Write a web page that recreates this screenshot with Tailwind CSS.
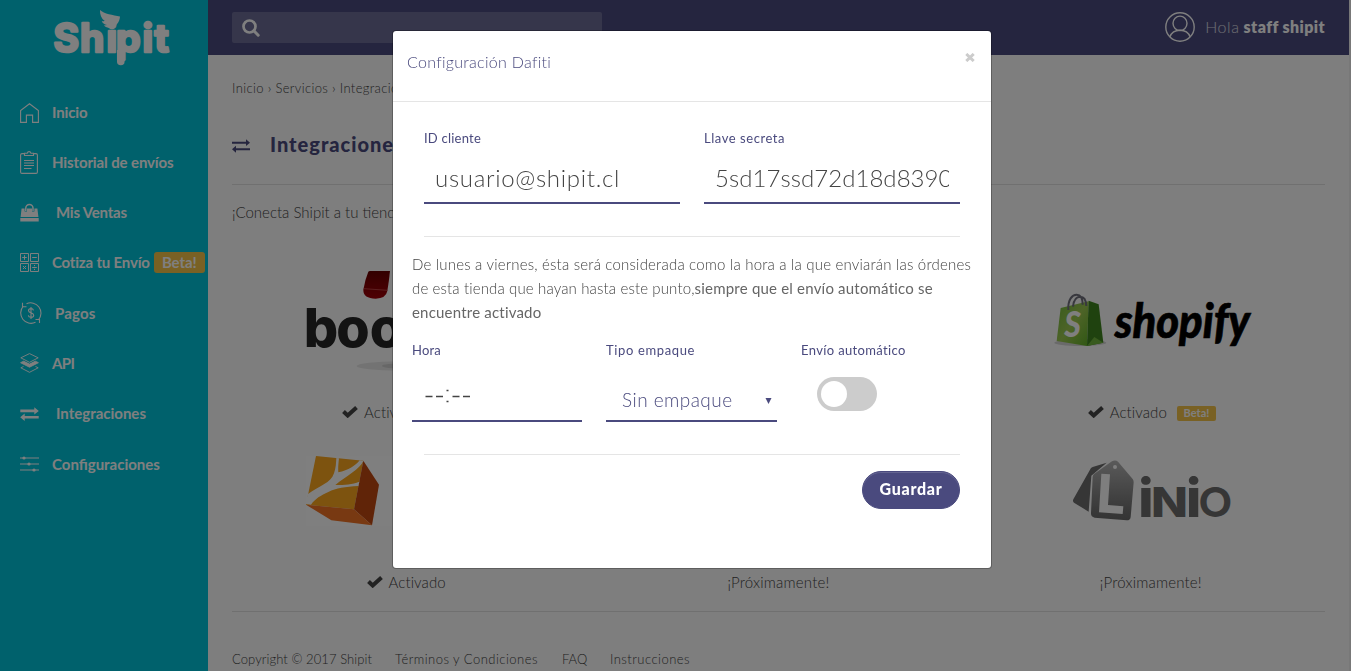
<!DOCTYPE html>
<html lang="es">
<head>
<meta charset="utf-8">
<title>Shipit - Integraciones</title>
<script src="https://cdn.jsdelivr.net/npm/@tailwindcss/browser@4"></script>
</head>
<body class="h-[671px] overflow-hidden bg-[#fcfcfc] font-['Lato','Open_Sans',sans-serif] text-[#444]">
<div class="flex h-[671px] w-full">

  <!-- Sidebar -->
  <aside class="flex h-full w-[208px] shrink-0 flex-col bg-[#00c3d9] text-white">
    <svg class="h-[87px] w-[208px] shrink-0" viewBox="0 0 208 87" fill="#fff">
      <g font-family="Inter" font-weight="700" font-size="39" stroke="#fff" stroke-width="2.600" stroke-linejoin="round"><text y="51.500" x="53.500 80 106.500 116 142.500 154.500">Shipit</text></g>
      <path d="M117 50h7.600v11.500a3.500 3.500 0 0 1-7.600 0z"/>
      <path d="M100 10c4 4 13 5 20 6.500c-.5 6-4 10.500-10 11.300c-3 .3-5-1-6-2.500c1.200.1 2.200 0 3-.4c-2.800-.5-4.600-2-5.200-4c1 .3 2 .4 3 .2c-3.500-2.500-5-6.500-4.800-11.100z"/>
    </svg>
    <nav class="flex flex-col text-[15px] font-bold">
      <a class="flex h-[50.25px] items-center pl-5">
        <svg class="mt-px h-5 w-[19px]" viewBox="0 0 19 20" fill="none" stroke="#fff" stroke-width="1.1"><path d="M.6 19.400V7.600L9.500.8l8.900 6.800v11.800h-5.800v-7.300H6.400v7.300z"/></svg>
        <span class="ml-[13px] tracking-[-0.13px]">Inicio</span>
      </a>
      <a class="flex h-[50.25px] items-center pl-5">
        <svg class="h-[23px] w-[19px]" viewBox="0 0 19 23" fill="none" stroke="#fff" stroke-width="1.100"><path d="M4.500 2.600H2a1.400 1.400 0 0 0-1.400 1.400v17a1.400 1.400 0 0 0 1.400 1.400h14a1.400 1.400 0 0 0 1.400-1.400V4A1.400 1.400 0 0 0 16 2.600h-2.500M4.500 4.500v-2.200h2.700c.5-2.300 3.300-2.300 3.800 0h2.500v2.200zM4 9.500h10M4 12h10M4 14.500h10M4 17.500h7.500"/></svg>
        <span class="ml-[13px] tracking-[-0.12px]">Historial de envíos</span>
      </a>
      <a class="flex h-[50.25px] items-center pl-5">
        <svg class="h-[19px] w-[19px]" viewBox="0 0 19 19"><path fill="none" stroke="#fff" stroke-width="1.500" d="M5.800 8V5a3.600 3.600 0 0 1 7.200 0v3"/><path fill="#fff" d="M1.600 5.500h3v3h2.400v-3h5v3h2.400v-3h3L18.400 14H.6zM.3 15h18.400v3.500H.3z"/></svg>
        <span class="ml-[17px] tracking-[-0.2px]">Mis Ventas</span>
      </a>
      <a class="flex h-[50.25px] items-center pb-px pl-5">
        <svg class="h-[19px] w-[19px]" viewBox="0 0 19 19" fill="none" stroke="#fff"><path d="M.5.5h8v8h-8zM10.500.5h8v8h-8zM.5 10.500h8v8h-8zM10.500 10.500h8v8h-8zM4.500 2.200v4.600M2.200 4.500h4.600M12.200 4.500h4.600M3 13l3 3M6 13l-3 3M12.200 14.500h4.600M14.500 12v1.200M14.500 15.800V17"/></svg>
        <span class="ml-[13px] tracking-[-0.19px]">Cotiza tu Envío</span>
        <span class="ml-1 flex h-[21px] w-[51px] items-center justify-center rounded-[3px] bg-[#f2c248] tracking-[-0.1px]">Beta!</span>
      </a>
      <a class="flex h-[50.25px] items-center pl-5">
        <svg class="h-[22px] w-[22px]" viewBox="0 0 22 22" fill="none" stroke="#fff" stroke-width="1.100"><path d="M6.500 1.700A10.300 10.300 0 0 1 18.500 17.800M15.500 20.300A10.300 10.300 0 0 1 3.300 4.200M2.500.8v4h4M19.500 21v-3.500h-4"/><path d="M13.500 8.300c-.3-1.200-1.300-1.700-2.500-1.700c-1.500 0-2.500.8-2.500 2c0 3 5.200 1.500 5.200 4.600c0 1.300-1.100 2.100-2.700 2.100c-1.500 0-2.500-.7-2.700-2M11 5v12"/></svg>
        <span class="ml-[13px] tracking-[0.2px]">Pagos</span>
      </a>
      <a class="flex h-[50.25px] items-center pl-5">
        <svg class="h-5 w-[19px]" viewBox="0 0 19 20" fill="none" stroke="#fff" stroke-width=".9"><path d="M9.500.6l8.700 4.200l-8.700 4.500L.8 4.800zM3.500 13.500L.8 14.800l8.700 4.500l8.700-4.500l-2.700-1.300"/><path fill="#fff" d="M.6 9.700l3-1.500l5.900 2.900l5.900-2.900l3 1.500l-8.900 4.500z"/></svg>
        <span class="ml-[13px] tracking-[-0.6px]">API</span>
      </a>
      <a class="flex h-[50.25px] items-center pl-5">
        <svg class="h-[14px] w-[19px]" viewBox="0 0 19 14" fill="#fff"><path d="M.3 2.600h14V.2l4.500 3.700l-4.500 3.600V5.200H.3zM18.700 9h-14V6.600L.2 10.200l4.500 3.700v-2.300h14z"/></svg>
        <span class="ml-[17px]">Integraciones</span>
      </a>
      <a class="flex h-[50.25px] items-center pl-5">
        <svg class="h-4 w-[19px]" viewBox="0 0 19 16" fill="#fff"><path d="M0 1.500h19v1H0zM0 7.500h19v1H0zM0 13.500h19v1H0z"/><circle cx="4" cy="2" r="1.600"/><circle cx="9" cy="8" r="1.600"/><circle cx="14" cy="14" r="1.600"/></svg>
        <span class="ml-[13px]">Configuraciones</span>
      </a>
    </nav>
  </aside>

  <!-- Page -->
  <div class="flex min-w-0 flex-1 flex-col border-r-2 border-[#f0f0f0]">
    <header class="flex h-[55px] shrink-0 items-center justify-between bg-[#4a4a7e] pr-6 pb-px pl-6">
      <div class="mt-px flex h-[31px] w-[370px] items-center rounded-[2px] bg-[#6c6c96] pl-[10px]">
        <svg class="h-[18px] w-[18px]" viewBox="0 0 18 18" fill="none" stroke="#fff"><circle cx="7.500" cy="7.500" r="6" stroke-width="2.700"/><path d="M11.800 11.800l4.400 4.400" stroke-width="3" stroke-linecap="round"/></svg>
      </div>
      <div class="flex items-center text-base text-white">
        <svg class="mr-[10px] h-[30px] w-[30px]" viewBox="0 0 30 30" fill="none" stroke="#fff" stroke-width="1.400"><circle cx="15" cy="15" r="14.200"/><ellipse cx="15" cy="11.300" rx="7" ry="7.200"/><path d="M4.800 25C6.500 20.500 10 18.300 15 18.300s8.500 2.200 10.200 6.700"/></svg>
        <span class="font-light tracking-[0.6px] text-white/80">Hola</span>
        <span class="ml-1 font-extrabold tracking-[0.4px]">staff shipit</span>
      </div>
    </header>

    <main class="flex flex-col px-6 pt-6">
      <div class="h-[18px] text-[13px] leading-[18px] font-light tracking-[0.36px] whitespace-nowrap">Inicio › Servicios › Integraciones</div>
      <div class="mt-[32px] flex h-[30px] items-center text-[#4a4a7e]">
        <svg class="mt-[3px] h-[14px] w-[18px]" viewBox="0 0 18 14" fill="currentColor"><path d="M0 2.700h14V.2l4 3.500l-4 3.400V4.700H0zM18 9.300H4V6.800L0 10.300l4 3.500v-2.500h14z"/></svg>
        <h1 class="ml-5 text-[20px] font-black tracking-[1px]">Integraciones</h1>
      </div>
      <div class="mt-[25px] h-px bg-[#e0e0e0]"></div>
      <p class="mt-[15px] h-6 text-[15px] leading-6 font-light">¡Conecta Shipit a tu tienda!</p>

      <section class="-mx-3 mt-8 grid grid-cols-3 text-[15px]">
        <div class="flex h-[170px] flex-col items-center pt-[15px]">
          <svg class="h-[100px] w-[200px] shrink-0" viewBox="0 0 200 100"><defs><linearGradient id="red" x2="0" y2="1"><stop stop-color="#600"/><stop offset="1" stop-color="#a00008"/></linearGradient></defs>
            <g transform="translate(-16 -21) scale(.33333)"><path fill="url(#red)" d="M235 65q2-2 5-2h60q-3 30-8 60q-4 22-35 23q-38 0-37-27q5-30 15-54z"/><path d="M221 116l72 5" stroke="#d06060" stroke-width="2"/><ellipse cx="330" cy="348" rx="130" ry="14" fill="#e6e6e6"/><ellipse cx="340" cy="348" rx="64" ry="8" fill="#cfcfcf"/>
            <text x="41 139 239 339 390 440" y="292" font-family="Inter" font-weight="800" font-size="162" fill="#262626">bootic</text></g></svg>
          <div class="mt-[29px] flex h-6 items-center">
            <svg class="mr-[6px] h-3 w-4" viewBox="0 0 16 12" fill="none" stroke="#444" stroke-width="4"><path d="M1.500 5.500l4.200 4L14.500 1.500"/></svg>
            <span class="font-light tracking-[0.1px]">Activado</span><span class="ml-[10px] flex h-[15px] w-[39px] items-center justify-center rounded-[2px] bg-[#f2c248] text-[11px] font-bold text-white">Beta!</span>
          </div>
        </div>
        <div class="h-[170px]"></div>
        <div class="flex h-[170px] flex-col items-center pt-[15px]">
          <svg class="h-[100px] w-[204px] shrink-0" viewBox="-2 0 204 100"><defs><linearGradient id="gl" x1="0" y1="0" x2="1" y2="1"><stop stop-color="#6fb83a"/><stop offset=".5" stop-color="#9cc850"/><stop offset="1" stop-color="#5fae26"/></linearGradient></defs>
            <g transform="translate(-10 9) scale(.33333)"><ellipse cx="118" cy="188" rx="78" ry="10" fill="#d4d4d4"/><path fill="url(#gl)" d="M59 84l84-20l-5 134l-91-15z"/><path fill="#3f851f" d="M143 62l30 11l14 115l-49 10z"/><path fill="#70b53c" d="M138 198l22-27l27 17z"/><path fill="none" stroke="#70707c" stroke-width="6" d="M82 90c-2-32 12-46 25-46s18 12 18 30M96 80c2-22 12-30 22-30s17 8 18 28"/><text x="70" y="172" font-family="Lato" font-weight="900" font-style="italic" font-size="106" fill="#fff" textLength="50" lengthAdjust="spacingAndGlyphs">S</text>
            <text x="221" y="173" font-family="Lato" font-weight="900" font-style="italic" font-size="140" textLength="406" lengthAdjust="spacingAndGlyphs" fill="#000" stroke="#000" stroke-width="2">shopify</text></g></svg>
          <div class="mt-[29px] ml-[2px] flex h-6 items-center">
            <svg class="mr-[6px] h-3 w-4" viewBox="0 0 16 12" fill="none" stroke="#444" stroke-width="4"><path d="M1.500 5.500l4.200 4L14.500 1.500"/></svg>
            <span class="font-light tracking-[0.1px]">Activado</span><span class="mt-[3px] ml-[10px] flex h-[15px] w-[39px] items-center justify-center rounded-[2px] bg-[#f2c248] text-[11px] font-bold text-white">Beta!</span>
          </div>
        </div>
        <div class="flex h-[170px] flex-col items-center pt-[15px]">
          <svg class="h-[100px] w-[200px] shrink-0" viewBox="0 0 200 100"><path fill="#fff" d="M0 15h200v70H0z"/>
            <g transform="translate(-16 -191) scale(.33333)"><path fill="#faa61e" d="M78 618l142 14l-28 146l-144-14z"/><path fill="#c04810" d="M220 632l47 72l-21 122l-54-48z"/><path fill="#f07224" d="M48 764l144 14l54 48l-122-15z"/>
            <path fill="#fff" d="M54 732C90 706 122 700 132 670C138 652 138 640 139 624l8 1c-2 18-3 30-2 42c30-6 52-20 64-36l11 2c-10 24-50 44-84 72c30 0 50-2 72-10l-3 13c-40 2-66 6-90 18c-22 10-40 20-52 38l-18-2z"/></g></svg>
          <div class="mt-[29px] flex h-6 items-center">
            <svg class="mr-[6px] h-3 w-4" viewBox="0 0 16 12" fill="none" stroke="#444" stroke-width="4"><path d="M1.500 5.500l4.200 4L14.500 1.500"/></svg>
            <span class="font-light tracking-[0.1px]">Activado</span>
          </div>
        </div>
        <div class="flex h-[170px] flex-col items-center pt-[144px]"><span class="h-6 leading-6 font-light tracking-[0.19px]">¡Próximamente!</span></div>
        <div class="flex h-[170px] flex-col items-center pt-[15px]">
          <svg class="h-[100px] w-[200px] shrink-0" viewBox="0 0 200 100"><defs><linearGradient id="tag" x2="0" y2="1"><stop stop-color="#b4b4b4"/><stop offset=".8" stop-color="#747474"/><stop offset="1" stop-color="#686868"/></linearGradient></defs>
            <g transform="translate(-11 -1) scale(.33333)"><path fill="#6c6c6c" d="M200 68l-42 13q-6 2-8 8L100 178q-3 6 2 10l44 27l8-108z"/><path fill="url(#tag)" d="M162 102l54-38q10-6 18 1l44 52q3 4 3 10l-9 104q-1 10-12 10l-96-8q-12-2-11-14l5-107q0-6 4-10z"/><circle cx="225" cy="81" r="6" fill="#fcfcfc"/><path fill="#fcfcfc" d="M184 101l26 2l-6 92l46 4l-2 23l-71-5z"/>
            <text y="231" fill="#6c6c6c" font-family="Inter" font-weight="800"><tspan x="295" font-size="162">i</tspan><tspan x="333" font-size="124" textLength="111" lengthAdjust="spacingAndGlyphs">N</tspan><tspan x="438" font-size="162">i</tspan><tspan x="477" font-size="124" font-family="Lato" font-weight="900" textLength="98" lengthAdjust="spacingAndGlyphs">O</tspan></text></g></svg>
          <span class="mt-[29px] h-6 leading-6 font-light tracking-[0.19px]">¡Próximamente!</span>
        </div>
      </section>

      <div class="mt-[15px] h-px bg-[#e0e0e0]"></div>
      <footer class="mt-[38px] flex h-[18px] text-[13px] leading-[18px] font-light whitespace-nowrap">
        <span class="w-[163px] tracking-[0.08px]">Copyright © 2017 Shipit</span>
        <span class="w-[167px] tracking-[0.48px]">Términos y Condiciones</span>
        <span class="w-[48px]">FAQ</span>
        <span class="tracking-[0.47px]">Instrucciones</span>
      </footer>
    </main>
  </div>
</div>

<!-- Dialog -->
<div class="fixed inset-0 flex items-start justify-center bg-black/50 pt-[30px] pl-[33px]">
  <div class="flex h-[539px] w-[600px] flex-col rounded-[4px] border border-black/25 bg-white bg-clip-padding">
    <div class="flex h-[71px] shrink-0 justify-between border-b border-[#e5e5e5] pt-5 pr-4 pl-[14px]">
      <h2 class="h-[22px] text-base leading-[22px] font-light tracking-[0.29px] text-[#4a4a7e]">Configuración Dafiti</h2>
      <svg class="mt-[2px] h-[9px] w-[10px]" viewBox="0 0 10 9" stroke="#ccc" stroke-width="3"><path d="M1.300 1l7.400 7M8.700 1L1.300 8"/></svg>
    </div>
    <div class="flex flex-col px-[31px] pt-[26px]">
      <div class="grid grid-cols-2 gap-6">
        <label class="flex flex-col text-[13px] leading-5 tracking-[0.22px] text-[#4a4a7e]">ID cliente
          <span class="mt-[8px] h-[48px] overflow-hidden border-b-2 border-[#4a4a7e] px-[11px] text-[24px] leading-[44px] font-light tracking-[0.7px] whitespace-nowrap text-[#444]">usuario@shipit.cl</span>
        </label>
        <label class="flex flex-col text-[13px] leading-5 tracking-[0.55px] text-[#4a4a7e]">Llave secreta
          <span class="mt-[8px] h-[48px] border-b-2 border-[#4a4a7e] px-[11px] text-[24px] leading-[44px] font-light tracking-[0.05px] whitespace-nowrap text-[#444]"><span class="block h-[46px] overflow-hidden">5sd17ssd72d18d8390</span></span>
        </label>
      </div>
      <div class="mt-8 h-px bg-[#e5e5e5]"></div>
      <p class="-mx-3 mt-[15px] text-[15px] leading-6 font-light whitespace-nowrap text-[#444]"><span class="tracking-[0.2px]">De lunes a viernes, ésta será considerada como la hora a la que enviarán las órdenes</span><br><span class="tracking-[0.14px]">de esta tienda que hayan hasta este punto,</span><span class="font-normal tracking-[0.2px] text-[#666]">siempre que el envío automático se<br>encuentre activado</span></p>
      <div class="-mx-3 mt-4 grid grid-cols-[170px_171px_1fr] gap-x-6 text-[13px] leading-5 text-[#4a4a7e]">
        <label class="flex flex-col tracking-[0.2px]">Hora
          <span class="mt-[7px] h-[55px] border-b-2 border-[#4a4a7e] px-3 pt-[11px]"><svg class="mt-[7px] h-[18px] w-[50px]" viewBox="0 0 50 18" stroke="#444" stroke-width="1.300"><path d="M1.500 11.500h7M12 11.500h7M28.500 11.500h7M39 11.500h7M22.500 5.500h2M22.500 16.500h2" /></svg></span>
        </label>
        <label class="flex flex-col tracking-[0.63px]">Tipo empaque
          <span class="mt-[7px] flex h-[55px] items-center justify-between border-b-2 border-[#4a4a7e] pt-[13px] pr-[5px] pl-4 text-[19px] font-light tracking-[0.45px]">Sin empaque<svg class="mt-[2px] h-[6px] w-[7px]" viewBox="0 0 7 6" fill="#4a4a7e"><path d="M.5 0h6L3.500 6z"/></svg></span>
        </label>
        <div class="flex flex-col tracking-[0.36px]">Envío automático
          <span class="mt-[17px] ml-4 flex h-[34px] w-[60px] items-center rounded-full bg-[#ccc] pl-1"><span class="h-[26px] w-[26px] rounded-full bg-white"></span></span>
        </div>
      </div>
      <div class="mt-8 h-px bg-[#e5e5e5]"></div>
      <button class="mt-4 h-[38px] w-[98px] self-end rounded-full border border-[#4a4a7e] bg-[#4a4a7e] pb-[2px] text-base font-black tracking-[0.7px] text-white shadow-[inset_0_1px_0_rgba(255,255,255,0.15)]">Guardar</button>
    </div>
  </div>
</div>
</body>
</html>
